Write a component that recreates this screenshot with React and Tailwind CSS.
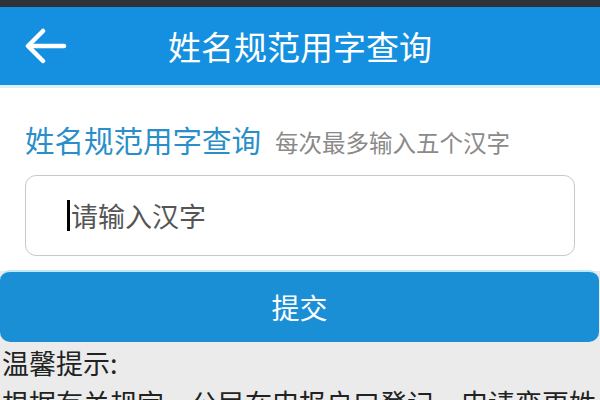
export default function App() {
  return (
    <div className="w-[600px] h-[400px] overflow-hidden bg-[#ebebeb] font-['Noto_Sans_CJK_SC','Noto_Sans',sans-serif]">
      {/* status bar strip */}
      <div className="h-[7px] bg-[#2f3338]" />

      {/* header */}
      <div className="h-[81px] bg-[#1590e0] border-b-[3px] border-[#d8f2f7] grid grid-cols-[1fr_auto_1fr] items-center">
        <div className="pl-[25px] flex items-center">
          <svg width="42" height="36" viewBox="0 0 42 36" fill="none" stroke="white" strokeWidth="4.5" strokeLinecap="round" strokeLinejoin="round">
            <path d="M39 18H4" />
            <path d="M18 3L3 18l15 15" />
          </svg>
        </div>
        <div className="text-white text-[33px] leading-none">姓名规范用字查询</div>
        <div />
      </div>

      {/* form */}
      <div className="bg-white pt-[33px] pb-[15px]">
        <div className="px-[25px] flex items-baseline gap-[14px]">
          <span className="text-[#2a8fc9] text-[29.5px] leading-[36px]">姓名规范用字查询</span>
          <span className="text-[#8a8a8a] text-[23.5px]">每次最多输入五个汉字</span>
        </div>
        <div className="mt-[15px] mx-[25px] h-[81px] rounded-[11px] border border-[#c9c9c9] flex items-center pl-[41px]">
          <span className="w-[3px] h-[31px] bg-black" />
          <span className="text-[#555] text-[27px] leading-none ml-[1px]">请输入汉字</span>
        </div>
      </div>

      {/* submit */}
      <button className="block w-[599px] h-[72px] -mt-[1px] rounded-[10px] bg-[#1a8fd5] border-t-2 border-[#bfe8f5] text-white text-[28px] leading-none">
        提交
      </button>

      {/* tips */}
      <div className="pl-[2px] pt-[1px] text-[#222] text-[27px] leading-[40px] whitespace-nowrap">
        <div>温馨提示:</div>
        <div>根据有关规定，公民在申报户口登记，申请变更姓</div>
      </div>
    </div>
  );
}
